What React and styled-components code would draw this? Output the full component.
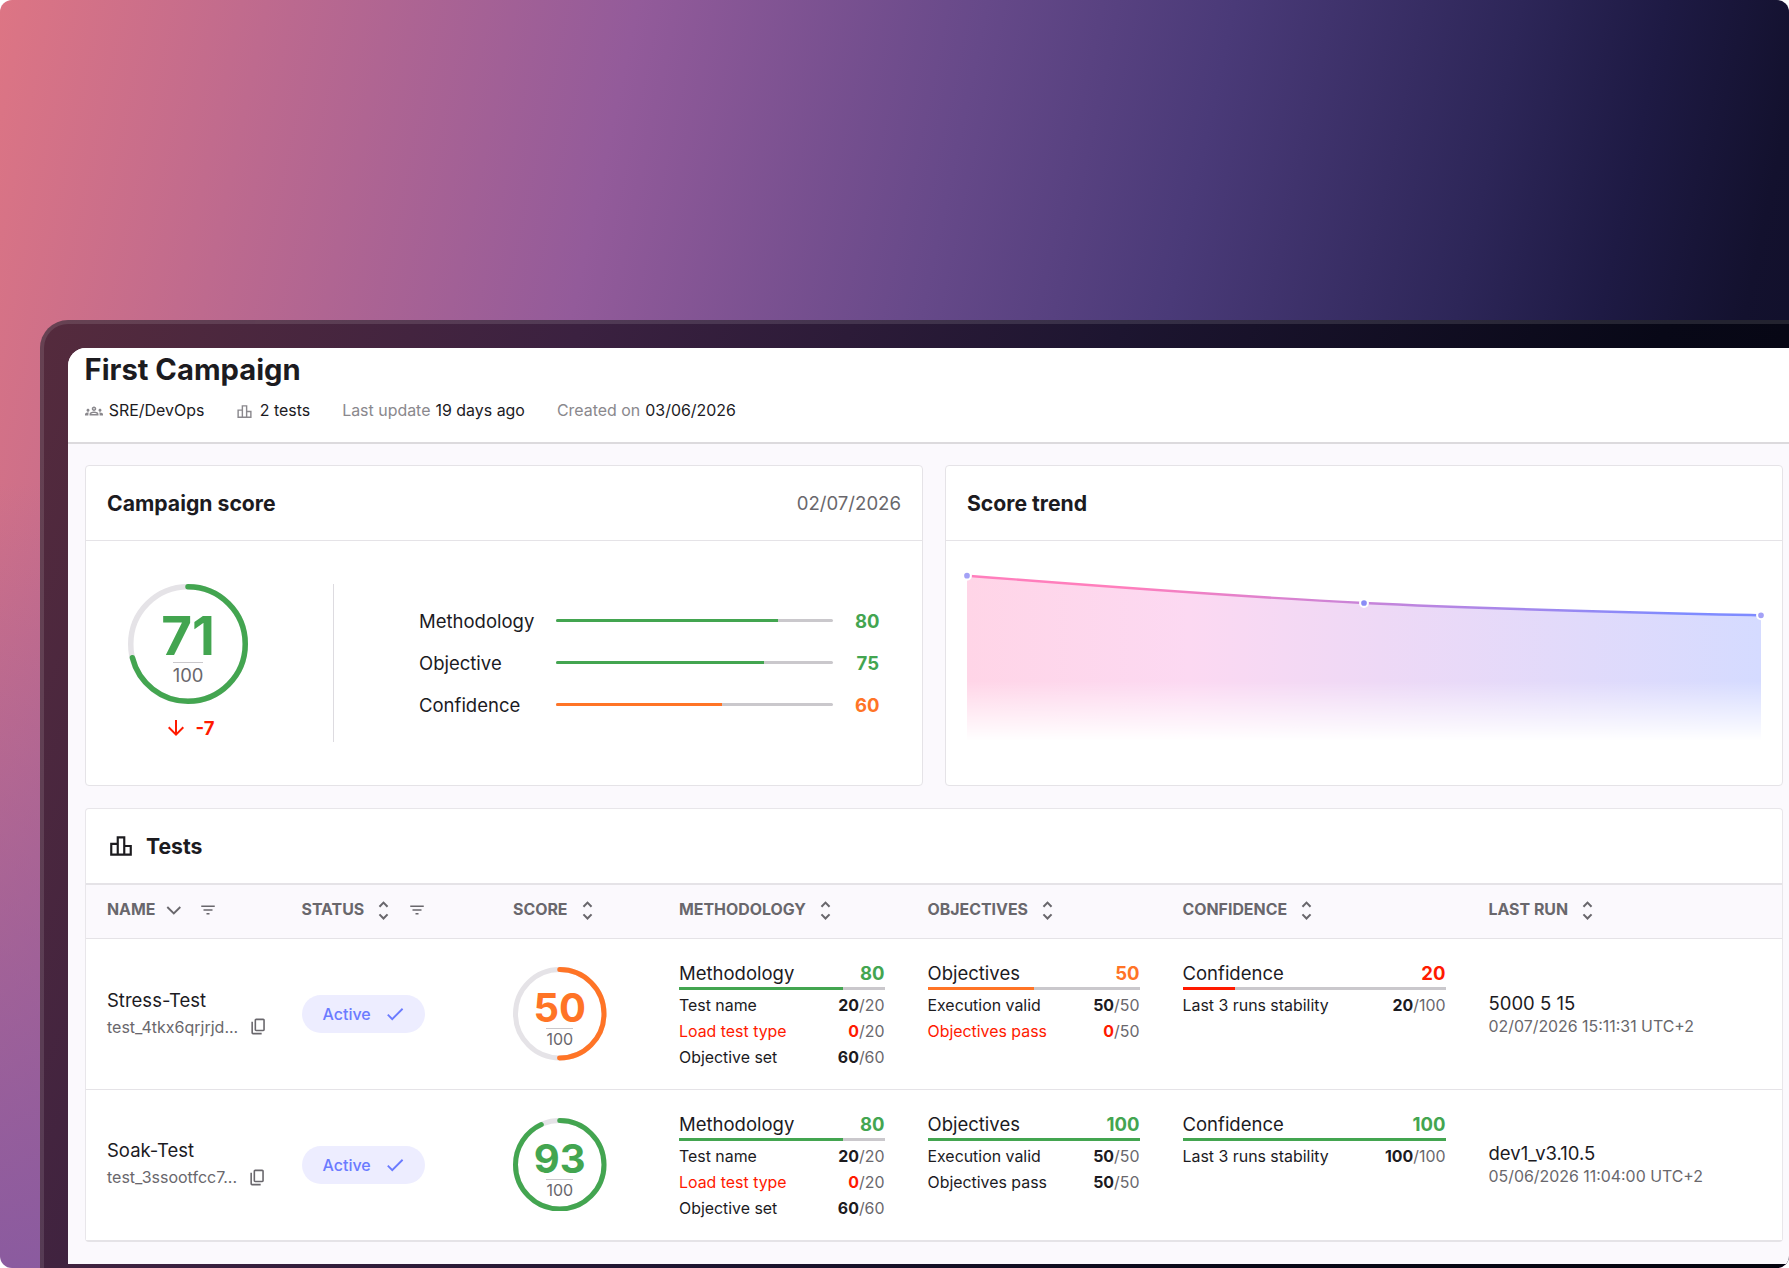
import React from 'react';
import styled, { createGlobalStyle } from 'styled-components';
import { MdOutlineGroups, MdOutlineLeaderboard, MdFilterList, MdCheck, MdArrowDownward, MdUnfoldMore } from 'react-icons/md';

const GREEN = '#43a550';
const ORANGE = '#ff7426';
const RED = '#ff1a00';

const tests = [
  {
    name: 'Stress-Test',
    id: 'test_4tkx6qrjrjd...',
    score: 50,
    color: ORANGE,
    methodology: { value: 80, color: GREEN },
    objectives: { value: 50, color: ORANGE, pass: 0 },
    confidence: { value: 20, color: RED },
    run: '5000 5 15',
    date: '02/07/2026 15:11:31 UTC+2',
  },
  {
    name: 'Soak-Test',
    id: 'test_3ssootfcc7...',
    score: 93,
    color: GREEN,
    methodology: { value: 80, color: GREEN },
    objectives: { value: 100, color: GREEN, pass: 50 },
    confidence: { value: 100, color: GREEN },
    run: 'dev1_v3.10.5',
    date: '05/06/2026 11:04:00 UTC+2',
  },
];

const columns = [
  { label: 'Name', sorted: true, filter: true },
  { label: 'Status', filter: true },
  { label: 'Score' },
  { label: 'Methodology' },
  { label: 'Objectives' },
  { label: 'Confidence' },
  { label: 'Last run' },
];

function ChevronIcon() {
  return (
    <svg width="22" height="22" viewBox="0 0 22 22" fill="none" stroke="currentColor" strokeWidth="1.9">
      <path d="M5.3 8 L11.8 14.4 L18.3 8" />
    </svg>
  );
}

function CopyIcon() {
  return (
    <svg width="19" height="19" viewBox="0 0 24 24" fill="currentColor">
      <path d="M9 18q-.825 0-1.412-.587T7 16V4q0-.825.588-1.412T9 2h9q.825 0 1.413.588T20 4v12q0 .825-.587 1.413T18 18zm0-2h9V4H9zm-4 6q-.825 0-1.412-.587T3 20V6h2v14h11v2z" />
    </svg>
  );
}

function ScoreRing({ size, stroke, score, color, large }) {
  const r = (size - stroke) / 2;
  const length = 2 * Math.PI * r;
  return (
    <Ring $size={size}>
      <RingSvg width={size} height={size} viewBox={`0 0 ${size} ${size}`}>
        <circle cx={size / 2} cy={size / 2} r={r} fill="none" stroke="#e5e3e7" strokeWidth={stroke} />
        <circle
          cx={size / 2}
          cy={size / 2}
          r={r}
          fill="none"
          stroke={color}
          strokeWidth={stroke}
          strokeLinecap="round"
          strokeDasharray={`${(length * score) / 100} ${length}`}
          transform={`rotate(-90 ${size / 2} ${size / 2})`}
        />
      </RingSvg>
      <RingScore $color={color} $large={large}>{score}</RingScore>
      <RingTotal $large={large}>100</RingTotal>
    </Ring>
  );
}

function Metric({ label, value, color }) {
  return (
    <MetricRow>
      <span>{label}</span>
      <Track $rounded>
        <Fill $color={color} style={{ width: `${value}%` }} />
      </Track>
      <Value $color={color}>{value}</Value>
    </MetricRow>
  );
}

function Breakdown({ title, value, color, items }) {
  return (
    <div>
      <BreakdownHead>
        {title}
        <Value $color={color}>{value}</Value>
      </BreakdownHead>
      <Track>
        <Fill $color={color} style={{ width: `${value}%` }} />
      </Track>
      <BreakdownList>
        {items.map(([label, score, max]) => (
          <BreakdownItem key={label} $failed={score === 0}>
            <span>{label}</span>
            <span><b>{score}</b><Max>/{max}</Max></span>
          </BreakdownItem>
        ))}
      </BreakdownList>
    </div>
  );
}

function TrendChart() {
  const line = 'M7 13.7 C139.3 24.1 271.7 34.4 404 41 C536.3 47.6 668.7 50.4 801 53.3';
  return (
    <Chart width="808" height="184" viewBox="0 0 808 184">
      <defs>
        <linearGradient id="trendLine" gradientUnits="userSpaceOnUse" x1="7" y1="0" x2="801" y2="0">
          <stop offset="0.2" stopColor="#ff7ebc" />
          <stop offset="0.9" stopColor="#7f8bff" />
        </linearGradient>
        <linearGradient id="trendFill" gradientUnits="userSpaceOnUse" x1="7" y1="0" x2="801" y2="0">
          <stop offset="0" stopColor="#ffd5e7" />
          <stop offset="0.28" stopColor="#fcd9f2" />
          <stop offset="0.52" stopColor="#eed9f6" />
          <stop offset="1" stopColor="#d5dbff" />
        </linearGradient>
        <linearGradient id="trendFade" x1="0" y1="0" x2="0" y2="1">
          <stop offset="0.64" stopColor="#fff" />
          <stop offset="1" stopColor="#000" />
        </linearGradient>
        <mask id="trendMask" maskUnits="userSpaceOnUse" x="0" y="0" width="808" height="184">
          <rect x="0" y="13" width="808" height="166" fill="url(#trendFade)" />
        </mask>
      </defs>
      <path d={`${line} V179 H7 Z`} fill="url(#trendFill)" mask="url(#trendMask)" />
      <path d={line} fill="none" stroke="url(#trendLine)" strokeWidth="2.4" />
      {[[7, 13.7], [404, 41], [801, 53.3]].map(([x, y]) => (
        <circle key={x} cx={x} cy={y} r="3.9" fill={x === 404 ? '#8b8cf6' : '#a3a1f6'} stroke="#fff" strokeWidth="2.1" />
      ))}
    </Chart>
  );
}

export default function App() {
  return (
    <Backdrop>
      <GlobalStyle />
      <Device>
        <Screen>
          <PageHeader>
            <Title>First Campaign</Title>
            <Meta>
              <MetaItem><MdOutlineGroups size={18} /><strong>SRE/DevOps</strong></MetaItem>
              <MetaItem><MdOutlineLeaderboard size={17} /><strong>2 tests</strong></MetaItem>
              <MetaItem>Last update <strong>19 days ago</strong></MetaItem>
              <MetaItem>Created on <strong>03/06/2026</strong></MetaItem>
            </Meta>
          </PageHeader>
          <Content>
            <Cards>
              <Card>
                <CardHeader>
                  <CardTitle>Campaign score</CardTitle>
                  <CardDate>02/07/2026</CardDate>
                </CardHeader>
                <ScoreBody>
                  <Overall>
                    <ScoreRing size={120} stroke={5.5} score={71} color={GREEN} large />
                    <Delta><MdArrowDownward size={24} />-7</Delta>
                  </Overall>
                  <Metrics>
                    <Metric label="Methodology" value={80} color={GREEN} />
                    <Metric label="Objective" value={75} color={GREEN} />
                    <Metric label="Confidence" value={60} color={ORANGE} />
                  </Metrics>
                </ScoreBody>
              </Card>
              <Card>
                <CardHeader>
                  <CardTitle>Score trend</CardTitle>
                </CardHeader>
                <TrendChart />
              </Card>
            </Cards>
            <TestsCard>
              <TestsHeader>
                <MdOutlineLeaderboard size={26} />
                <CardTitle>Tests</CardTitle>
              </TestsHeader>
              <HeadRow>
                {columns.map((col) => (
                  <HeadCell key={col.label}>
                    <HeadLabel>{col.label}</HeadLabel>
                    {col.sorted ? <ChevronIcon /> : <MdUnfoldMore size={25} />}
                    {col.filter && <FilterIcon size={18} $wide={col.sorted} />}
                  </HeadCell>
                ))}
              </HeadRow>
              {tests.map((test) => (
                <Row key={test.name}>
                  <Cell>
                    <Name>{test.name}</Name>
                    <TestId>{test.id}<CopyIcon /></TestId>
                  </Cell>
                  <Cell>
                    <Status>Active<MdCheck size={22} /></Status>
                  </Cell>
                  <Cell>
                    <ScoreRing size={93.5} stroke={5} score={test.score} color={test.color} />
                  </Cell>
                  <TopCell>
                    <Breakdown
                      title="Methodology"
                      {...test.methodology}
                      items={[['Test name', 20, 20], ['Load test type', 0, 20], ['Objective set', 60, 60]]}
                    />
                  </TopCell>
                  <TopCell>
                    <Breakdown
                      title="Objectives"
                      {...test.objectives}
                      items={[['Execution valid', 50, 50], ['Objectives pass', test.objectives.pass, 50]]}
                    />
                  </TopCell>
                  <TopCell>
                    <Breakdown
                      title="Confidence"
                      {...test.confidence}
                      items={[['Last 3 runs stability', test.confidence.value, 100]]}
                    />
                  </TopCell>
                  <Cell>
                    <RunName>{test.run}</RunName>
                    <RunDate>{test.date}</RunDate>
                  </Cell>
                </Row>
              ))}
            </TestsCard>
          </Content>
        </Screen>
      </Device>
    </Backdrop>
  );
}

const GlobalStyle = createGlobalStyle`
  * {
    box-sizing: border-box;
  }

  body {
    margin: 0;
    background: #fff;
    color: #1c1b1f;
    font-family: Inter, 'Liberation Sans', sans-serif;
    overflow: hidden;
  }
`;

const Backdrop = styled.div`
  width: 1789px;
  height: 1268px;
  padding: 320px 0 0 40px;
  overflow: hidden;
  border-radius: 12px;
  background:
    linear-gradient(180deg, rgba(136, 90, 160, 0) 38%, rgba(136, 90, 160, 0.95) 100%),
    linear-gradient(102deg, #dd7584 0%, #be6a8e 13%, #935b9a 31%, #664989 48%, #4a3a78 60%, #2d2658 74%, #1e1a44 81%, #13112e 88%, #0c0c22 100%);
`;

const Device = styled.div`
  height: 948px;
  padding: 24px 0 4px 24px;
  border: solid rgba(255, 255, 255, 0.11);
  border-width: 4px 0 0 4px;
  border-radius: 28px 0 0 0;
  background: linear-gradient(114deg, #552b3d 0%, #3b2140 25%, #1d1530 50%, #080817 75%, #04040e 100%) border-box;
`;

const Screen = styled.div`
  height: 916px;
  border-radius: 18px 0 0 0;
  overflow: hidden;
  background: #fbf9fd;
`;

const PageHeader = styled.header`
  height: 96px;
  padding: 4px 16.5px 0;
  border-bottom: 2px solid #dcdadd;
  background: #fff;
`;

const Title = styled.h1`
  margin: 0;
  font-size: 29.2px;
  line-height: 36px;
  font-weight: 700;
`;

const Meta = styled.div`
  display: flex;
  gap: 32px;
  margin-top: 12px;
`;

const MetaItem = styled.div`
  display: flex;
  align-items: center;
  gap: 5px;
  font-size: 15.95px;
  line-height: 22px;
  color: #8a888d;

  svg {
    margin-right: 1.3px;
  }

  strong {
    font-weight: 400;
    color: #1c1b1f;
  }
`;

const Content = styled.main`
  padding: 21px 6px 0 17px;
`;

const Cards = styled.div`
  display: grid;
  grid-template-columns: 1fr 1fr;
  gap: 22px;
`;

const Card = styled.section`
  height: 321px;
  border: 1px solid #e5e3e7;
  border-radius: 4px;
  background: #fff;
`;

const CardHeader = styled.div`
  display: flex;
  align-items: center;
  justify-content: space-between;
  height: 75px;
  padding: 0 21px 1px;
  border-bottom: 1px solid #e5e3e7;
`;

const CardTitle = styled.h2`
  margin: 0;
  font-size: 21.2px;
  font-weight: 700;
`;

const CardDate = styled.span`
  font-size: 18.6px;
  color: #69676c;
`;

const ScoreBody = styled.div`
  display: flex;
  padding: 43px 43px 0 42px;
`;

const Overall = styled.div`
  width: 206px;
  height: 158px;
  border-right: 1px solid #dddbe0;
`;

const Ring = styled.div`
  position: relative;
  display: flex;
  flex-direction: column;
  align-items: center;
  justify-content: center;
  width: ${({ $size }) => $size}px;
  height: ${({ $size }) => $size}px;
  padding-top: 9px;
`;

const RingSvg = styled.svg`
  position: absolute;
  inset: 0;
`;

const RingScore = styled.div`
  font-size: ${({ $large }) => ($large ? 53 : 40)}px;
  line-height: ${({ $large }) => ($large ? 52 : 40)}px;
  font-weight: 700;
  color: ${({ $color }) => $color};
`;

const RingTotal = styled.div`
  border-top: 1px solid #cac8cc;
  font-size: ${({ $large }) => ($large ? 18.4 : 16)}px;
  line-height: ${({ $large }) => ($large ? 24 : 20)}px;
  color: #69676c;
`;

const Delta = styled.div`
  display: flex;
  align-items: center;
  justify-content: center;
  gap: 8px;
  width: 120px;
  margin-top: 12px;
  padding-left: 2px;
  font-size: 18.5px;
  line-height: 24px;
  font-weight: 700;
  color: ${RED};
`;

const Metrics = styled.div`
  flex: 1;
  padding: 15.5px 0 0 85px;
`;

const MetricRow = styled.div`
  display: grid;
  grid-template-columns: 115px 1fr 24px;
  align-items: center;
  gap: 22px;
  height: 42px;
  font-size: 18.5px;
`;

const Value = styled.span`
  text-align: right;
  font-size: 18.5px;
  font-weight: 700;
  color: ${({ $color }) => $color};
`;

const Track = styled.div`
  height: 3px;
  border-radius: ${({ $rounded }) => ($rounded ? 2 : 0)}px;
  overflow: hidden;
  background: #cac8cc;
`;

const Fill = styled.div`
  height: 100%;
  background: ${({ $color }) => $color};
`;

const Chart = styled.svg`
  display: block;
  margin: 21px 0 0 14px;
`;

const TestsCard = styled.section`
  margin-top: 22px;
  border: 1px solid #e8e6ea;
  border-bottom: 2px solid #e5e3e7;
  border-radius: 4px;
  background: #fff;
`;

const TestsHeader = styled.div`
  display: flex;
  align-items: center;
  gap: 12px;
  height: 76px;
  padding: 0 22px 1px;
  border-bottom: 2px solid #e5e3e7;
`;

const HeadRow = styled.div`
  display: grid;
  grid-template-columns: 194.5px 211.5px 166px 248.5px 255px 306px 1fr;
  height: 54px;
  background: #fbf9fd;
  border-bottom: 1px solid #e5e3e7;
`;

const HeadCell = styled.div`
  display: flex;
  align-items: center;
  gap: 7px;
  padding: 0 21px 3px;
  font-size: 15.9px;
  font-weight: 700;
  text-transform: uppercase;
  color: #69676c;
`;

const HeadLabel = styled.span`
  margin-bottom: 2px;
`;

const FilterIcon = styled(MdFilterList)`
  margin-left: ${({ $wide }) => ($wide ? 8 : 5)}px;
`;

const Row = styled(HeadRow)`
  height: 151px;
  background: #fff;

  &:last-child {
    height: 150px;
    padding-bottom: 1px;
    border-bottom: 0;
  }
`;

const Cell = styled.div`
  display: flex;
  flex-direction: column;
  justify-content: center;
  align-items: flex-start;
  padding: 0 21px;
`;

const TopCell = styled.div`
  padding: 21.5px 22px 0 21px;
`;

const Name = styled.div`
  margin-top: -1px;
  font-size: 18.5px;
  line-height: 26px;
`;

const TestId = styled.div`
  display: flex;
  align-items: center;
  gap: 11px;
  font-size: 16px;
  line-height: 28px;
  color: #69676c;
`;

const Status = styled.div`
  display: flex;
  align-items: center;
  gap: 13px;
  height: 38px;
  padding: 0 19px 0 21px;
  border-radius: 19px;
  background: #ededff;
  font-size: 16px;
  font-weight: 500;
  color: #6b7bff;
`;

const BreakdownHead = styled.div`
  display: flex;
  justify-content: space-between;
  padding-bottom: 1px;
  font-size: 18.5px;
  line-height: 25px;
`;

const BreakdownList = styled.div`
  padding-top: 3px;
`;

const BreakdownItem = styled.div`
  display: flex;
  justify-content: space-between;
  font-size: 15.9px;
  line-height: 26px;
  color: ${({ $failed }) => ($failed ? RED : '#1c1b1f')};
`;

const Max = styled.span`
  color: #69676c;
`;

const RunName = styled.div`
  font-size: 18.5px;
  line-height: 24px;
`;

const RunDate = styled.div`
  font-size: 15.9px;
  line-height: 23px;
  color: #69676c;
`;
